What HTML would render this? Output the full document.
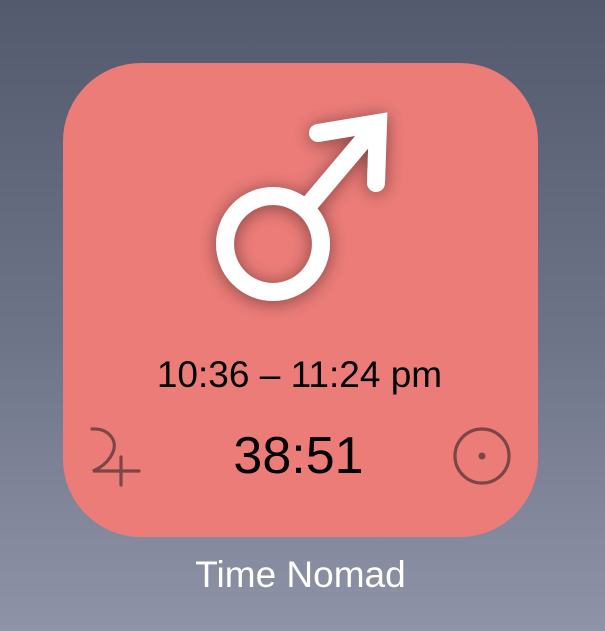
<!DOCTYPE html>
<html><head><style>
html,body{margin:0;padding:0}
body{width:605px;height:631px;overflow:hidden;background:linear-gradient(#535a6e,#6f7589 55%,#8f93a7);position:relative;font-family:"Liberation Sans",sans-serif}
.card{position:absolute;left:63px;top:63px;width:475px;height:474px;border-radius:78px;background:#ec7c78}
.t{position:absolute;left:0;width:605px;text-align:center;white-space:nowrap}
</style></head><body>
<div class="card"></div>
<svg width="605" height="631" style="position:absolute;left:0;top:0">
<defs><filter id="sh" x="-30%" y="-30%" width="160%" height="160%"><feGaussianBlur in="SourceAlpha" stdDeviation="9"/><feOffset dx="0" dy="2"/><feComponentTransfer><feFuncA type="linear" slope="0.45"/></feComponentTransfer><feMerge><feMergeNode/><feMergeNode in="SourceGraphic"/></feMerge></filter></defs>
<g filter="url(#sh)" fill="none" stroke="#fff" stroke-width="18" stroke-linecap="round" stroke-linejoin="round">
<circle cx="273" cy="244" r="48"/>
<path d="M307,207 L372,130"/>
<path d="M318,133 L378,123 L376,183" stroke-linejoin="miter" stroke-miterlimit="1.6"/>
</g>
<g fill="none" stroke="#7d4546" stroke-width="3.2" stroke-linecap="round">
<path d="M92,429 C108,428 118,440 113,452 C109,462 100,468 93,471 L139,471 M121,457 V485"/>
<circle cx="482" cy="456" r="27"/>
</g>
<circle cx="482" cy="456" r="3.5" fill="#7d4546"/>
</svg>
<div class="t" style="top:355px;left:-3px;font-size:37px;line-height:40px;color:#000">10:36 – 11:24 pm</div>
<div class="t" style="top:427px;left:-4px;font-size:52px;line-height:58px;color:#000">38:51</div>
<div class="t" style="top:555px;left:-2px;font-size:37px;line-height:40px;color:#fff">Time Nomad</div>
</body></html>
